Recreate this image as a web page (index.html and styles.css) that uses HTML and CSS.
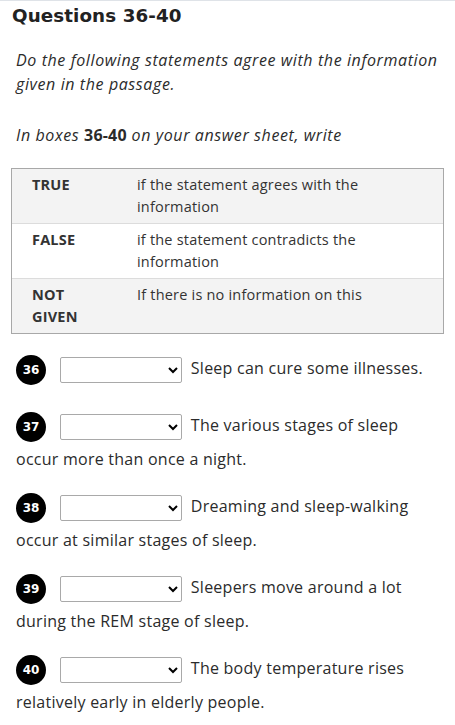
FILE: index.html
```html
<!DOCTYPE html>
<html lang="en">
<head>
<meta charset="utf-8">
<title>Questions 36-40</title>
<link rel="stylesheet" href="styles.css">
</head>
<body>
<div class="page">
  <h2 class="title">Questions 36-40</h2>
  <div class="instructions">
    <p class="inst">Do the following statements agree with the information given in the passage.</p>
    <p class="inst">In boxes <strong>36-40</strong> on your answer sheet, write</p>
  </div>
  <div class="key">
    <div class="key-row shade">
      <div class="key-term">TRUE</div>
      <div class="key-desc">if the statement agrees with the information</div>
    </div>
    <div class="key-row">
      <div class="key-term">FALSE</div>
      <div class="key-desc">if the statement contradicts the information</div>
    </div>
    <div class="key-row shade">
      <div class="key-term">NOT GIVEN</div>
      <div class="key-desc">If there is no information on this</div>
    </div>
  </div>
  <div class="questions">
    <p class="q"><span class="num">36</span> <select class="answer"><option></option><option>TRUE</option><option>FALSE</option><option>NOT GIVEN</option></select> <span class="stmt">Sleep can cure some illnesses.</span></p>
    <p class="q"><span class="num">37</span> <select class="answer"><option></option><option>TRUE</option><option>FALSE</option><option>NOT GIVEN</option></select> <span class="stmt">The various stages of sleep occur more than once a night.</span></p>
    <p class="q"><span class="num">38</span> <select class="answer"><option></option><option>TRUE</option><option>FALSE</option><option>NOT GIVEN</option></select> <span class="stmt">Dreaming and sleep-walking occur at similar stages of sleep.</span></p>
    <p class="q"><span class="num">39</span> <select class="answer"><option></option><option>TRUE</option><option>FALSE</option><option>NOT GIVEN</option></select> <span class="stmt">Sleepers move around a lot during the REM stage of sleep.</span></p>
    <p class="q"><span class="num">40</span> <select class="answer"><option></option><option>TRUE</option><option>FALSE</option><option>NOT GIVEN</option></select> <span class="stmt">The body temperature rises relatively early in elderly people.</span></p>
  </div>
</div>
</body>
</html>
```
FILE: styles.css
```css
html, body {
  margin: 0;
  padding: 0;
  background: #fff;
}
body {
  font-family: "Open Sans", "Noto Sans", sans-serif;
  color: #2b2b2b;
  border-top: 1px solid #dfe3e8;
}
.page {
  padding: 0 11px 12px;
}
.title {
  font-family: "DejaVu Sans", sans-serif;
  font-weight: 700;
  font-size: 18.3px;
  line-height: 24px;
  margin: 3px 0 0 1px;
  color: #222;
  letter-spacing: 0.1px;
}
.instructions {
  padding: 0 5px;
}
.inst {
  font-style: italic;
  font-size: 16px;
  line-height: 24px;
  letter-spacing: 0.6px;
  margin: 20px 0 0;
}
.inst + .inst {
  margin-top: 27px;
}
.inst strong {
  font-style: normal;
  font-weight: 700;
  letter-spacing: 0.2px;
}
.key {
  margin-top: 21px;
  border: 1px solid #a8a8a8;
}
.key-row {
  display: grid;
  grid-template-columns: 105px 1fr;
  font-size: 14.5px;
  line-height: 22px;
  letter-spacing: 0.2px;
  border-top: 1px solid #dcdcdc;
}
.key-row:first-child {
  border-top: 0;
}
.key-row.shade {
  background: #f3f3f3;
}
.key-term {
  font-weight: 700;
  padding: 5px 20px 5px 20px;
  color: #333;
}
.key-desc {
  padding: 5px 20px 5px 20px;
  color: #333;
}
.questions {
  padding: 0 5px;
  margin-top: 16px;
}
.q {
  font-size: 16px;
  line-height: 24px;
  letter-spacing: 0.25px;
  margin: 0 0 17px;
}
.num {
  display: inline-block;
  vertical-align: middle;
  width: 30px;
  height: 30px;
  margin: 5px 0;
  border-radius: 50%;
  background: #000;
  color: #fff;
  font-family: "DejaVu Sans", sans-serif;
  font-weight: 700;
  font-size: 12px;
  line-height: 30px;
  text-align: center;
  letter-spacing: 0;
}
.answer {
  vertical-align: middle;
  width: 122px;
  height: 26px;
  margin-left: 10px;
  margin-right: 4px;
  border: 1px solid #a9a9a9;
  border-radius: 2px;
  background-color: #fff;
  font-size: 14px;
}
```
